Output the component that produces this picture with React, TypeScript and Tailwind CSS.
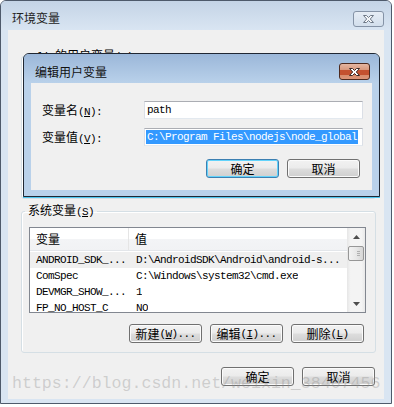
import type { ReactNode } from 'react';

const cjk = "font-['Noto_Sans_CJK_SC',sans-serif] text-[12px]";
const mono = "font-['Liberation_Mono',monospace] text-[11px] tracking-[-0.6px]";
const btnBase =
  'flex h-[19px] w-[73px] items-center justify-center rounded-[3px] border bg-[linear-gradient(#f2f2f2_0%,#ebebeb_48%,#dddddd_52%,#cfcfcf_100%)] leading-[14px] text-black';

function Key({ k, tail = '' }: { k: string; tail?: string }) {
  return (
    <span className={mono}>
      (<span className="underline underline-offset-1">{k}</span>){tail}
    </span>
  );
}

function Btn({ children, focused = false }: { children: ReactNode; focused?: boolean }) {
  return (
    <div
      className={
        focused
          ? btnBase + ' border-[#3c7fb1] shadow-[inset_0_0_0_1px_#62d3fb]'
          : btnBase + ' border-[#707070] shadow-[inset_0_0_0_1px_#fbfbfb]'
      }
    >
      {children}
    </div>
  );
}

function XGlyph({ fill, stroke }: { fill: string; stroke: string }) {
  return (
    <svg width="13" height="10" viewBox="0 0 13 10">
      <path
        d="M1.5 1.5h3l2 2 2-2h3l-3.2 3.5 3.2 3.5h-3l-2-2-2 2h-3l3.2-3.5z"
        fill={fill}
        stroke={stroke}
        strokeWidth="1"
        strokeLinejoin="round"
      />
    </svg>
  );
}

const rows = [
  ['ANDROID_SDK_...', 'D:\\AndroidSDK\\Android\\android-s...'],
  ['ComSpec', 'C:\\Windows\\system32\\cmd.exe'],
  ['DEVMGR_SHOW_...', '1'],
  ['FP_NO_HOST_C', 'NO'],
];

function VarList() {
  return (
    <div className="flex h-[86px] w-[337px] overflow-hidden border border-[#828790] bg-white">
      <div className="flex w-[317px] flex-col">
        <div className="flex h-[23px] shrink-0 border-b border-[#e3e6ea] bg-[linear-gradient(#ffffff_0%,#ffffff_50%,#f3f4f6_51%,#f1f2f4_100%)]">
          <div className={'flex w-[99px] items-center border-r border-[#e5e5e5] pl-[6px] ' + cjk}>变量</div>
          <div className={'flex items-center pl-[6px] ' + cjk}>值</div>
        </div>
        <div className="mt-px flex flex-col">
          {rows.map((r, i) => (
            <div
              key={r[0]}
              className={
                i === 0
                  ? 'flex h-[16px] items-center whitespace-nowrap bg-[#efefef]'
                  : 'flex h-[16px] items-center whitespace-nowrap'
              }
            >
              <div className={'w-[99px] shrink-0 overflow-hidden pl-[6px] ' + mono}>{r[0]}</div>
              <div className={'overflow-hidden pl-[7px] ' + mono}>{r[1]}</div>
            </div>
          ))}
        </div>
      </div>
      {/* scrollbar */}
      <div className="flex w-[18px] flex-col items-center bg-[linear-gradient(90deg,#e6e6e6,#f4f4f4_20%,#f4f4f4_80%,#e9e9e9)]">
        <div className="flex h-[18px] items-center justify-center">
          <svg width="7" height="4" viewBox="0 0 7 4">
            <path d="M3.5 0L7 4H0z" fill="#4d4d4d" />
          </svg>
        </div>
        <div className="flex h-[15px] w-[16px] items-center justify-end rounded-[2px] border border-[#979797] bg-[linear-gradient(90deg,#f3f3f3,#e8e8e8_50%,#d6d6d6)] pr-[3px]">
          <div className="flex flex-col gap-px">
            <div className="h-px w-[3px] bg-[#b0b0b0]" />
            <div className="h-px w-[3px] bg-[#b0b0b0]" />
            <div className="h-px w-[3px] bg-[#b0b0b0]" />
          </div>
        </div>
        <div className="flex-1" />
        <div className="flex h-[17px] items-center justify-center">
          <svg width="7" height="4" viewBox="0 0 7 4">
            <path d="M0 0H7L3.5 4z" fill="#4d4d4d" />
          </svg>
        </div>
      </div>
    </div>
  );
}

function EditDialog() {
  return (
    <div className="absolute left-[23px] top-[53px] flex h-[144px] w-[357px] flex-col rounded-t-[6px] border border-[#1f2733] bg-[#b9d1ea] shadow-[0_1px_0_#4fc6ee]">
      <div className="flex h-[29px] shrink-0 items-start justify-between rounded-t-[5px] bg-[linear-gradient(#9bb7d9,#b9d1ea)] pl-[11px] pr-[9px]">
        <span className={'mt-[11px] leading-[14px] text-[#111] ' + cjk}>编辑用户变量</span>
        <div className="mt-[9px] flex h-[17px] w-[31px] items-center justify-center rounded-[3px] border border-[#4e2a1e] bg-[linear-gradient(#e4b6a1_0%,#d99a7f_38%,#c4512f_42%,#c4512f_70%,#d88c6c_74%,#dc9477_100%)]">
          <XGlyph fill="#ffffff" stroke="#3a2a26" />
        </div>
      </div>
      <div className="mx-[7px] flex h-[107px] flex-col bg-[#f0f0f0] pl-[11px] pr-[9px] pt-[18px]">
        <div className="flex h-[18px] items-center">
          <div className="w-[102px] leading-[14px]">
            <span className={cjk}>变量名</span>
            <Key k="N" tail=":" />
          </div>
          <div className="flex h-[18px] flex-1 items-center border border-[#abadb3] border-x-[#dbdfe6] border-b-[#e3e9ef] bg-white pl-[2px]">
            <span className={mono + ' leading-[14px]'}>path</span>
          </div>
        </div>
        <div className="mt-[9px] flex h-[18px] items-center">
          <div className="w-[102px] leading-[14px]">
            <span className={cjk}>变量值</span>
            <Key k="V" tail=":" />
          </div>
          <div className="flex h-[18px] flex-1 items-center overflow-hidden whitespace-nowrap border border-[#abadb3] border-x-[#dbdfe6] border-b-[#e3e9ef] bg-white pl-px">
            <span className={mono + ' bg-[#3399ff] px-px leading-[14px] text-white'}>
              C:\Program Files\nodejs\node_global
            </span>
          </div>
        </div>
        <div className="mt-[13px] flex justify-end gap-[8px] pr-[3px]">
          <Btn focused>
            <span className={cjk}>确定</span>
          </Btn>
          <Btn>
            <span className={cjk}>取消</span>
          </Btn>
        </div>
      </div>
    </div>
  );
}

export default function App() {
  return (
    <div className="relative h-[407px] w-[394px] overflow-hidden bg-white text-black">
      <div className="flex h-[404px] w-[392px] flex-col rounded-t-[6px] border border-[#4e5a6b] bg-[#d9e5f2]">
        <div className="flex h-[29px] shrink-0 items-start justify-between rounded-t-[5px] bg-[linear-gradient(#c4d4e6,#d9e5f2)] pl-[11px] pr-[7px]">
          <span className={'mt-[10px] leading-[14px] text-[#222] ' + cjk}>环境变量</span>
          <div className="mt-[10px] flex h-[16px] w-[31px] items-center justify-center rounded-[3px] border border-[#8593a6] bg-[linear-gradient(#e6edf5,#d3dfec)]">
            <XGlyph fill="#f4f6f8" stroke="#6f7a88" />
          </div>
        </div>
        <div className="mx-[7px] flex h-[369px] flex-col bg-[#f0f0f0] pl-[13px] pr-[8px]">
          <fieldset className="mt-[18px] h-[151px] rounded-[3px] border border-[#d5dfe5] shadow-[inset_1px_1px_0_#ffffff]">
            <legend className={'ml-[12px] px-[3px] leading-[14px] ' + cjk}>
              <span className={mono}>li </span>的用户变量<Key k="U" />
            </legend>
          </fieldset>
          <fieldset className="mt-[4px] h-[150px] rounded-[3px] border border-[#d5dfe5] pb-[11px] pl-[7px] pr-[9px] pt-[8px] shadow-[inset_1px_1px_0_#ffffff]">
            <legend className={'-ml-[4px] px-[3px] leading-[14px] ' + cjk}>
              系统变量<Key k="S" />
            </legend>
            <VarList />
            <div className="mr-[2px] mt-[11px] flex justify-end gap-[8px]">
              <Btn>
                <span className={cjk}>新建</span>
                <Key k="W" tail="..." />
              </Btn>
              <Btn>
                <span className={cjk}>编辑</span>
                <Key k="I" tail="..." />
              </Btn>
              <Btn>
                <span className={cjk}>删除</span>
                <Key k="L" />
              </Btn>
            </div>
          </fieldset>
          <div className="mt-[14px] flex justify-end gap-[8px] pr-px">
            <Btn>
              <span className={cjk}>确定</span>
            </Btn>
            <Btn>
              <span className={cjk}>取消</span>
            </Btn>
          </div>
        </div>
      </div>
      <EditDialog />
      <div className="pointer-events-none absolute left-[12px] top-[374px] whitespace-nowrap font-['Liberation_Mono',monospace] text-[16.6px] leading-[20px] text-[rgba(140,140,140,0.35)]">
        https://blog.csdn.net/weixin_38407456
      </div>
    </div>
  );
}
